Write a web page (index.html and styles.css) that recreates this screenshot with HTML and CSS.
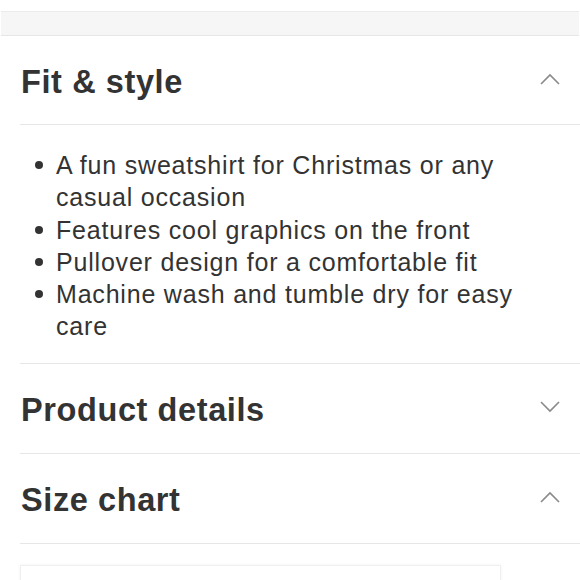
FILE: index.html
```html
<!DOCTYPE html>
<html lang="en">
<head>
<meta charset="utf-8">
<title>Product info</title>
<link rel="stylesheet" href="styles.css">
</head>
<body>
<div class="band"></div>
<div class="accordion">
  <section class="section">
    <div class="header">
      <h2 class="title">Fit &amp; style</h2>
      <svg class="chev" width="20" height="12" viewBox="0 0 20 12"><polyline points="1,11 10,2 19,11" fill="none" stroke="#8a8a8a" stroke-width="1.6"/></svg>
    </div>
    <ul class="list">
      <li>A fun sweatshirt for Christmas or any casual occasion</li>
      <li>Features cool graphics on the front</li>
      <li>Pullover design for a comfortable fit</li>
      <li>Machine wash and tumble dry for easy care</li>
    </ul>
  </section>
  <section class="section">
    <div class="header">
      <h2 class="title">Product details</h2>
      <svg class="chev" width="20" height="12" viewBox="0 0 20 12"><polyline points="1,1 10,10 19,1" fill="none" stroke="#8a8a8a" stroke-width="1.6"/></svg>
    </div>
  </section>
  <section class="section">
    <div class="header">
      <h2 class="title">Size chart</h2>
      <svg class="chev" width="20" height="12" viewBox="0 0 20 12"><polyline points="1,11 10,2 19,11" fill="none" stroke="#8a8a8a" stroke-width="1.6"/></svg>
    </div>
    <div class="chart-wrap">
      <div class="chart"></div>
    </div>
  </section>
</div>
</body>
</html>
```
FILE: styles.css
```css
html, body {
  margin: 0;
  padding: 0;
  background: #ffffff;
}
body {
  font-family: "Liberation Sans", Arial, Helvetica, sans-serif;
  color: #333333;
  overflow: hidden;
}
.band {
  margin: 11px 1px 0 1px;
  height: 23px;
  background: #f6f6f6;
  border-top: 1px solid #ebebeb;
  border-bottom: 1px solid #e6e6e6;
}
.accordion {
  padding-left: 20px;
}
.header {
  height: 88px;
  display: flex;
  align-items: center;
  justify-content: space-between;
  padding-right: 20px;
  border-bottom: 1px solid #e6e6e6;
}
.section + .section .header {
  height: 89px;
}
.title {
  margin: 0 0 0 1px;
  padding-top: 4px;
  font-size: 32.5px;
  font-weight: 700;
  color: #333333;
  letter-spacing: 0.6px;
}
.chev {
  display: block;
  margin-top: -2px;
}
.list {
  list-style: none;
  margin: 0;
  padding: 24px 20px 20px 0;
  border-bottom: 1px solid #e6e6e6;
  font-size: 25px;
  letter-spacing: 0.8px;
  line-height: 32.3px;
  color: #333333;
}
.list li {
  display: flex;
  align-items: flex-start;
}
.list li::before {
  content: "";
  flex: none;
  width: 8px;
  height: 8px;
  border-radius: 50%;
  background: #333333;
  margin: 12px 13px 0 15px;
}
.chart-wrap {
  padding: 21px 79px 0 0;
}
.chart {
  height: 200px;
  border: 1px solid #f0f0f0;
  box-shadow: 0 0 3px rgba(0, 0, 0, 0.06);
  background: #ffffff;
}
```
